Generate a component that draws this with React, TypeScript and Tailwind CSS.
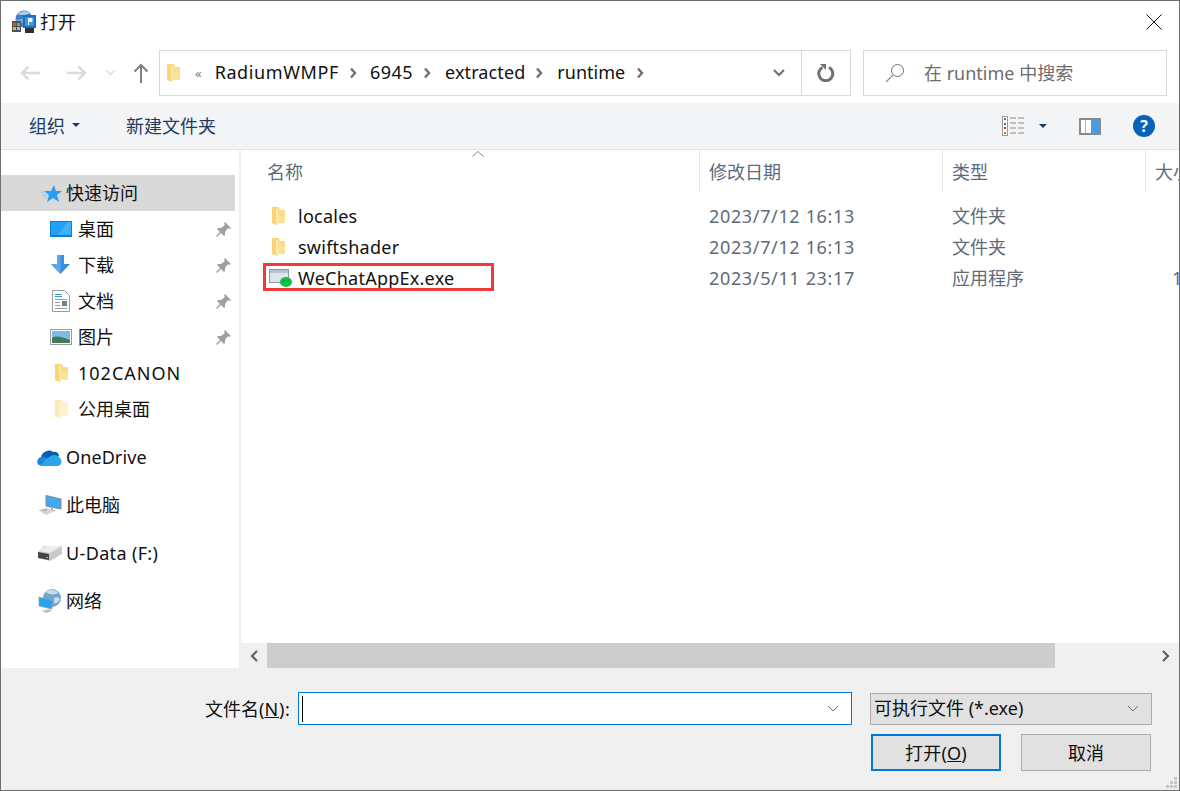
import type { ReactNode } from "react";

function Folder({ pale = false, className = "" }: { pale?: boolean; className?: string }) {
  return (
    <svg width="15" height="20" viewBox="0 0 15 20" className={className}>
      <path d="M1 1h7l1 3h5v13H6v2l-5-2z" fill={pale ? "#fdf0c4" : "#fbdc8a"} />
      <path d="M1 1h6v18l-6-2z" fill={pale ? "#fbe9b4" : "#f8d576"} />
      <path d="M7 10h7v7H7z" fill={pale ? "#fff3cf" : "#fde29a"} />
      <path d="M5 3h2v16l-2-1z" fill={pale ? "#fdf3d2" : "#fce7ac"} />
    </svg>
  );
}

function Pin() {
  return (
    <svg width="16" height="16" viewBox="0 0 16 16" className="absolute right-[4px] top-[11px]">
      <path d="M10 0l6 6-2 1-1-1-3 4v3l-1 1-3-3-4 4-1-1 4-4-3-3 1-1h3l4-3-1-1z" fill="#9aa0a6" />
    </svg>
  );
}

function AppIcon() {
  return (
    <svg width="26" height="24" viewBox="0 0 26 24">
      <circle cx="13" cy="9" r="8.500" fill="#3f7fc4" />
      <path d="M6 4c3-3 9-4 13-1-2 2-9 3-13 1z" fill="#a6cdee" />
      <path d="M5 9c3 1 6 0 8-1v5H6z" fill="#6fa8da" />
      <rect x="1" y="11" width="9" height="11" fill="#4d5258" />
      <rect x="2" y="13" width="3" height="3" fill="#e04a3a" />
      <rect x="6" y="13" width="3" height="3" fill="#6fae4a" />
      <rect x="2" y="17" width="3" height="3" fill="#e8b53a" />
      <rect x="6" y="17" width="3" height="3" fill="#8fc4ea" />
      <rect x="12" y="5" width="13" height="13" fill="#1a6cc0" />
      <rect x="14" y="7" width="9" height="9" fill="#3f97e0" />
      <path d="M17 8h3.500c1.500 0 1.500 4 0 4H18v3h-1z" fill="#e6f4ff" />
      <rect x="14" y="18" width="9" height="5" fill="#2c2f33" />
    </svg>
  );
}

const rowIcons: Record<string, ReactNode> = {
  desktop: (
    <svg width="22" height="16" viewBox="0 0 22 16">
      <rect width="22" height="16" fill="#0e7fd6" />
      <path d="M1 1h20v13H1z" fill="#21a1f8" />
      <path d="M8 14L17 1h4v13z" fill="#3db1fb" />
    </svg>
  ),
  download: (
    <svg width="20" height="20" viewBox="0 0 20 20">
      <path d="M6 0h7v9h6l-9.500 10L0 9h6z" fill="#3b8fdc" />
      <path d="M6 0h3.500v19L0 9h6z" fill="#5aa8ea" />
    </svg>
  ),
  docs: (
    <svg width="18" height="22" viewBox="0 0 18 22">
      <path d="M.5.500h12l5 5v16H.5z" fill="#fff" stroke="#9a9a9a" />
      <path d="M3 4h7v1H3zM3 6h7v1H3z" fill="#3c9be6" />
      <path d="M3 9h12v1H3zM3 12h5v1H3zM3 15h5v1H3zM3 18h12v1H3z" fill="#9a9a9a" />
      <rect x="10" y="11" width="5" height="5" fill="#5d8a92" />
    </svg>
  ),
  pictures: (
    <svg width="22" height="16" viewBox="0 0 22 16">
      <rect x=".5" y=".5" width="21" height="15" fill="#fff" stroke="#9a9a9a" />
      <rect x="2" y="2" width="18" height="12" fill="#7fb9e6" />
      <path d="M2 9c5-3 9-1 18 2v3H2z" fill="#3f7a5c" />
    </svg>
  ),
  cloud: (
    <svg width="25" height="17" viewBox="0 0 25 17">
      <path d="M4 9c0-5 7-10 12-6 3-1 6 1 6 4l-9 4z" fill="#0a5eb0" />
      <path d="M2 16c-3-2-2-7 2-8 2-1 4 0 5 1l6 7z" fill="#1488da" />
      <path d="M3 17h17c5 0 6-6 2-9-2-2-6-3-8-1l-5 3z" fill="#2aa5ec" />
    </svg>
  ),
  pc: (
    <svg width="24" height="20" viewBox="0 0 24 20">
      <path d="M8 .500l15 3.500v10L8 11z" fill="#3faaf2" stroke="#7f8c96" />
      <path d="M14 12.500v3h3" fill="none" stroke="#9aa3aa" strokeWidth="1.500" />
      <path d="M0 15l9-2 8 3-9 4z" fill="#d3d6d9" />
      <path d="M3 15l5-1 2 1-5 1z" fill="#a3a9ae" />
    </svg>
  ),
  drive: (
    <svg width="24" height="15" viewBox="0 0 24 15">
      <path d="M6 0h18v8L12 15 0 12V6z" fill="#c9c9c9" />
      <path d="M8 0h16L12 7 0 5z" fill="#ececec" />
      <path d="M0 6l11 2v6L0 12z" fill="#454545" />
      <path d="M8 11h2v1H8z" fill="#7fd06a" />
    </svg>
  ),
  network: (
    <svg width="24" height="24" viewBox="0 0 24 24">
      <circle cx="14" cy="9" r="9" fill="#6fa6cf" />
      <path d="M8 3c3-3 9-3 12 1-3 2-9 2-12-1zM16 9c2-1 5-1 6 1-1 3-4 5-6 4z" fill="#c6dff0" />
      <path d="M1 8l13 4v8L1 17z" fill="#28a3f2" stroke="#8a979f" strokeWidth=".6" />
      <path d="M4 22l7-2 3 2-6 2z" fill="#b9bdc0" />
    </svg>
  ),
};

const quick = [
  { label: "桌面", icon: rowIcons.desktop, pin: true, text: "" },
  { label: "下载", icon: rowIcons.download, pin: true, text: "" },
  { label: "文档", icon: rowIcons.docs, pin: true, text: "" },
  { label: "图片", icon: rowIcons.pictures, pin: true, text: "" },
  { label: "102CANON", icon: <Folder />, pin: false, text: "tracking-[1px]" },
  { label: "公用桌面", icon: <Folder pale />, pin: false, text: "" },
];

const roots = [
  { label: "OneDrive", icon: rowIcons.cloud, text: "tracking-[0.1px]" },
  { label: "此电脑", icon: rowIcons.pc, text: "" },
  { label: "U-Data (F:)", icon: rowIcons.drive, text: "tracking-[0.35px]" },
  { label: "网络", icon: rowIcons.network, text: "" },
];

const files = [
  { name: "locales", date: "2023/7/12 16:13", type: "文件夹", folder: true },
  { name: "swiftshader", date: "2023/7/12 16:13", type: "文件夹", folder: true },
  { name: "WeChatAppEx.exe", date: "2023/5/11 23:17", type: "应用程序", folder: false },
];

function Crumb() {
  return (
    <svg width="7" height="12" viewBox="0 0 7 12" className="shrink-0">
      <path d="M1 1.500l4 4.500-4 4.500" fill="none" stroke="#707070" strokeWidth="2.400" />
    </svg>
  );
}

function Chevron({ color = "#6e6e6e", width = 1 }: { color?: string; width?: number }) {
  return (
    <svg width="12" height="8" viewBox="0 0 12 8">
      <path d="M1 1l5 5 5-5" fill="none" stroke={color} strokeWidth={width} />
    </svg>
  );
}

function Caret() {
  return (
    <svg width="8" height="4" viewBox="0 0 8 4">
      <path d="M0 0h8L4 4z" fill="#1f3a5f" />
    </svg>
  );
}

export default function App() {
  return (
    <div className="w-[1180px] h-[791px] flex flex-col overflow-hidden bg-white border border-[#6e6e6e] text-[18px] leading-[24px] text-[#111] font-['Noto_Sans','Noto_Sans_CJK_SC',sans-serif]">
      {/* title bar */}
      <div className="h-[45px] shrink-0 flex items-center pl-[10px] pr-[17px] pb-[3px]">
        <AppIcon />
        <span className="ml-[3px]">打开</span>
        <svg width="16" height="16" viewBox="0 0 16 16" className="ml-auto">
          <path d="M.5.500l15 15M15.500.500l-15 15" stroke="#111" />
        </svg>
      </div>

      {/* nav row */}
      <div className="h-[57px] shrink-0 flex items-start pt-[4px] pl-[19px] pr-[12px]">
        <div className="h-[46px] w-[139px] shrink-0 flex items-center">
          <svg width="20" height="16" viewBox="0 0 20 16">
            <path d="M20 8H2M8.500 1.500L2 8l6.500 6.500" fill="none" stroke="#dcdcdc" strokeWidth="2.500" />
          </svg>
          <svg width="20" height="16" viewBox="0 0 20 16" className="ml-[27px]">
            <path d="M0 8h18M11.500 1.500L18 8l-6.500 6.500" fill="none" stroke="#dcdcdc" strokeWidth="2.500" />
          </svg>
          <svg width="9" height="6" viewBox="0 0 9 6" className="ml-[19px]">
            <path d="M.5.500l4 4 4-4" fill="none" stroke="#dcdcdc" strokeWidth="1.500" />
          </svg>
          <svg width="16" height="20" viewBox="0 0 16 20" className="ml-[18px]">
            <path d="M8 20V2M1.500 8.500L8 2l6.500 6.500" fill="none" stroke="#808080" strokeWidth="2" />
          </svg>
        </div>
        <div className="h-[46px] w-[692px] shrink-0 flex items-center border border-[#d9d9d9]">
          <Folder className="ml-[6px] shrink-0" />
          <span className="ml-[14px] text-[13px] text-[#777]">«</span>
          <span className="ml-[13px] tracking-[0.6px] -translate-y-[1px]">RadiumWMPF</span>
          <span className="ml-[11px]"><Crumb /></span>
          <span className="ml-[13px] tracking-[0.5px] -translate-y-[1px]">6945</span>
          <span className="ml-[11px]"><Crumb /></span>
          <span className="ml-[14px] tracking-[0.1px] -translate-y-[1px]">extracted</span>
          <span className="ml-[11px]"><Crumb /></span>
          <span className="ml-[14px] -translate-y-[1px]">runtime</span>
          <span className="ml-[12px]"><Crumb /></span>
          <span className="ml-auto mr-[16px]"><Chevron width={2} /></span>
          <div className="h-full w-[49px] shrink-0 flex items-center justify-center border-l border-[#d9d9d9]">
            <svg width="18" height="18" viewBox="0 0 18 18">
              <path d="M12 3.500a7 7 0 1 1-6.500 0" fill="none" stroke="#707070" strokeWidth="3" />
              <path d="M3 0h6v6z" fill="#707070" />
            </svg>
          </div>
        </div>
        <div className="h-[46px] flex-1 ml-[12px] flex items-center border border-[#d9d9d9] pl-[21px] text-[#6d6d6d]">
          <svg width="20" height="20" viewBox="0 0 20 20" className="shrink-0">
            <circle cx="12.500" cy="7.500" r="6" fill="none" stroke="#707070" />
            <path d="M8 12l-7 7" stroke="#b08d6b" strokeWidth="1.200" />
          </svg>
          <span className="ml-[19px]">在 runtime 中搜索</span>
        </div>
      </div>

      {/* toolbar */}
      <div className="h-[47px] shrink-0 flex items-center bg-[#f3f4f6] pl-[28px] pr-[24px] border-b border-[#e5e5e5] text-[#1f3a5f]">
        <span>组织</span>
        <span className="ml-[7px] mb-[2px] flex"><Caret /></span>
        <span className="ml-[46px]">新建文件夹</span>
        <svg width="22" height="20" viewBox="0 0 22 20" className="ml-auto">
          <rect x=".5" y=".5" width="5" height="19" fill="#fff" stroke="#9a9a9a" />
          <rect x="2" y="2" width="2" height="2" fill="#3a7a9c" />
          <rect x="2" y="7" width="2" height="2" fill="#3a7a9c" />
          <rect x="2" y="11" width="2" height="2" fill="#c0392b" />
          <rect x="2" y="16" width="2" height="2" fill="#7f8c4a" />
          <path d="M8 2h6M16 2h6M8 7h6M16 7h6M8 12h6M16 12h6M8 17h6M16 17h6" stroke="#8a8a8a" />
        </svg>
        <span className="ml-[15px] flex"><Caret /></span>
        <svg width="22" height="17" viewBox="0 0 22 17" className="ml-[32px]">
          <rect x="1" y="1" width="20" height="15" fill="#fff" stroke="#8a8a8a" strokeWidth="2" />
          <rect x="12" y="2" width="8" height="13" fill="#4a9be0" />
          <path d="M6.500 2v13" stroke="#b0b0b0" />
        </svg>
        <div className="ml-[32px] w-[22px] h-[22px] rounded-full bg-[#0a62b8] flex items-center justify-center text-white text-[16px] font-bold">
          ?
        </div>
      </div>

      {/* panes */}
      <div className="flex-1 min-h-0 flex">
        <nav className="w-[234px] shrink-0 pt-[25px] text-[#111]">
          <div className="h-[36px] bg-[#d9d9d9] flex items-center pl-[40px]">
            <svg width="21" height="17" viewBox="0 0 21 17" className="shrink-0">
              <path d="M13 0l2 6h6l-5 4 2 7-6-4-6 4 2-7-5-4h7z" fill="#2a9df4" />
              <path d="M0 7h4M1 10h5M2 13h4" stroke="#8cc8f5" />
            </svg>
            <span className="ml-[4px]">快速访问</span>
          </div>
          {quick.map((item) => (
            <div key={item.label} className="relative h-[36px] flex items-center">
              <div className="w-[77px] shrink-0 pl-[49px] pr-[6px] flex justify-center">{item.icon}</div>
              <span className={item.text}>{item.label}</span>
              {item.pin && <Pin />}
            </div>
          ))}
          <div className="h-[12px]" />
          {roots.map((item) => (
            <div key={item.label} className="h-[36px] mb-[12px] flex items-center">
              <div className="w-[65px] shrink-0 pl-[36px] pr-[4px] flex justify-center">{item.icon}</div>
              <span className={item.text}>{item.label}</span>
            </div>
          ))}
        </nav>

        <div className="w-[6px] shrink-0 border-r-[2px] border-[#f0f0f0]" />

        <main className="flex-1 min-w-0 flex flex-col overflow-hidden">
          <div className="flex-1 min-h-0 overflow-hidden">
            <div className="relative h-[42px] flex text-[#5a6b80]">
              <svg width="12" height="6" viewBox="0 0 12 6" className="absolute left-[231px] top-[1px]">
                <path d="M.5 5.500L6 .500l5.500 5" fill="none" stroke="#888" />
              </svg>
              <div className="w-[459px] shrink-0 flex items-center pl-[26px] pt-[2px] border-r border-[#e5e5e5]">名称</div>
              <div className="w-[243px] shrink-0 flex items-center pl-[9px] pt-[2px] border-r border-[#e5e5e5]">修改日期</div>
              <div className="w-[203px] shrink-0 flex items-center pl-[9px] pt-[2px] border-r border-[#e5e5e5]">类型</div>
              <div className="w-[60px] shrink-0 flex items-center pl-[9px] pt-[2px] whitespace-nowrap">大小</div>
            </div>
            <div className="pt-[8px]">
              {files.map((file) => (
                <div key={file.name} className="relative h-[31px] flex items-center text-[#5f6b78]">
                  <div className="w-[57px] shrink-0 pl-[30px] text-[#111] flex">
                    {file.folder ? (
                      <Folder />
                    ) : (
                      <svg width="24" height="18" viewBox="0 0 24 18" className="-ml-[2px]">
                        <rect x=".5" y=".5" width="19" height="13" fill="#dfe4ec" stroke="#8c96a6" />
                        <rect x="1" y="1" width="18" height="3" fill="#b8c2d0" />
                        <ellipse cx="17" cy="13" rx="6" ry="5" fill="#0fc04a" />
                        <path d="M14 12h2M18 12h2" stroke="#0a8f36" strokeWidth="1.200" />
                      </svg>
                    )}
                  </div>
                  <span className="w-[411px] shrink-0 text-[#111] tracking-[0.25px]">{file.name}</span>
                  <span className="w-[243px] shrink-0 tracking-[0.65px]">{file.date}</span>
                  <span className="w-[203px] shrink-0">{file.type}</span>
                  {!file.folder && <span className="pl-[17px]">1</span>}
                  {!file.folder && (
                    <div className="absolute left-[22px] top-[1px] w-[231px] h-[28px] border-[3px] border-[#f03a3a]" />
                  )}
                </div>
              ))}
            </div>
          </div>
          <div className="h-[25px] shrink-0 flex bg-[#f0f0f0]">
            <div className="w-[26px] shrink-0 flex items-center justify-center">
              <svg width="8" height="12" viewBox="0 0 8 12">
                <path d="M7 1L2 6l5 5" fill="none" stroke="#606060" strokeWidth="2.200" />
              </svg>
            </div>
            <div className="w-[788px] shrink-0 bg-[#cdcdcd]" />
            <div className="flex-1 flex items-center justify-end pr-[9px]">
              <svg width="8" height="12" viewBox="0 0 8 12">
                <path d="M1 1l5 5-5 5" fill="none" stroke="#606060" strokeWidth="2.200" />
              </svg>
            </div>
          </div>
        </main>
      </div>

      {/* footer */}
      <div className="relative h-[122px] shrink-0 bg-[#f0f0f0] pt-[24px] pl-[204px] pr-[27px]">
        <div className="flex items-center">
          <span className="w-[93px] shrink-0 whitespace-nowrap">
            文件名(<span className="underline tracking-[1px]">N</span>
            <span className="tracking-[0.5px]">):</span>
          </span>
          <div className="w-[554px] h-[33px] shrink-0 flex items-center bg-white border border-[#0078d7] pl-[3px] pr-[12px]">
            <div className="w-px h-[26px] bg-black" />
            <span className="ml-auto flex"><Chevron /></span>
          </div>
          <div className="ml-[18px] w-[282px] h-[32px] shrink-0 flex items-center bg-[#e1e1e1] border border-[#adadad] pl-[3px] pr-[12px]">
            <span className="-translate-y-[1px]">可执行文件 (*.exe)</span>
            <span className="ml-auto flex"><Chevron /></span>
          </div>
        </div>
        <div className="mt-[9px] flex justify-end gap-[20px] pr-[1px]">
          <button className="w-[130px] h-[37px] bg-[#e1e1e1] border-2 border-[#0078d7] tracking-[0.2px]">
            打开(<span className="underline">O</span>)
          </button>
          <button className="w-[130px] h-[37px] bg-[#e1e1e1] border border-[#adadad]">取消</button>
        </div>
        <svg width="12" height="12" viewBox="0 0 12 12" className="absolute right-[1px] bottom-[1px]">
          <path d="M8 0h3v3H8zM4 4h3v3H4zM8 4h3v3H8zM0 8h3v3H0zM4 8h3v3H4zM8 8h3v3H8z" fill="#c8c8c8" />
        </svg>
      </div>
    </div>
  );
}
